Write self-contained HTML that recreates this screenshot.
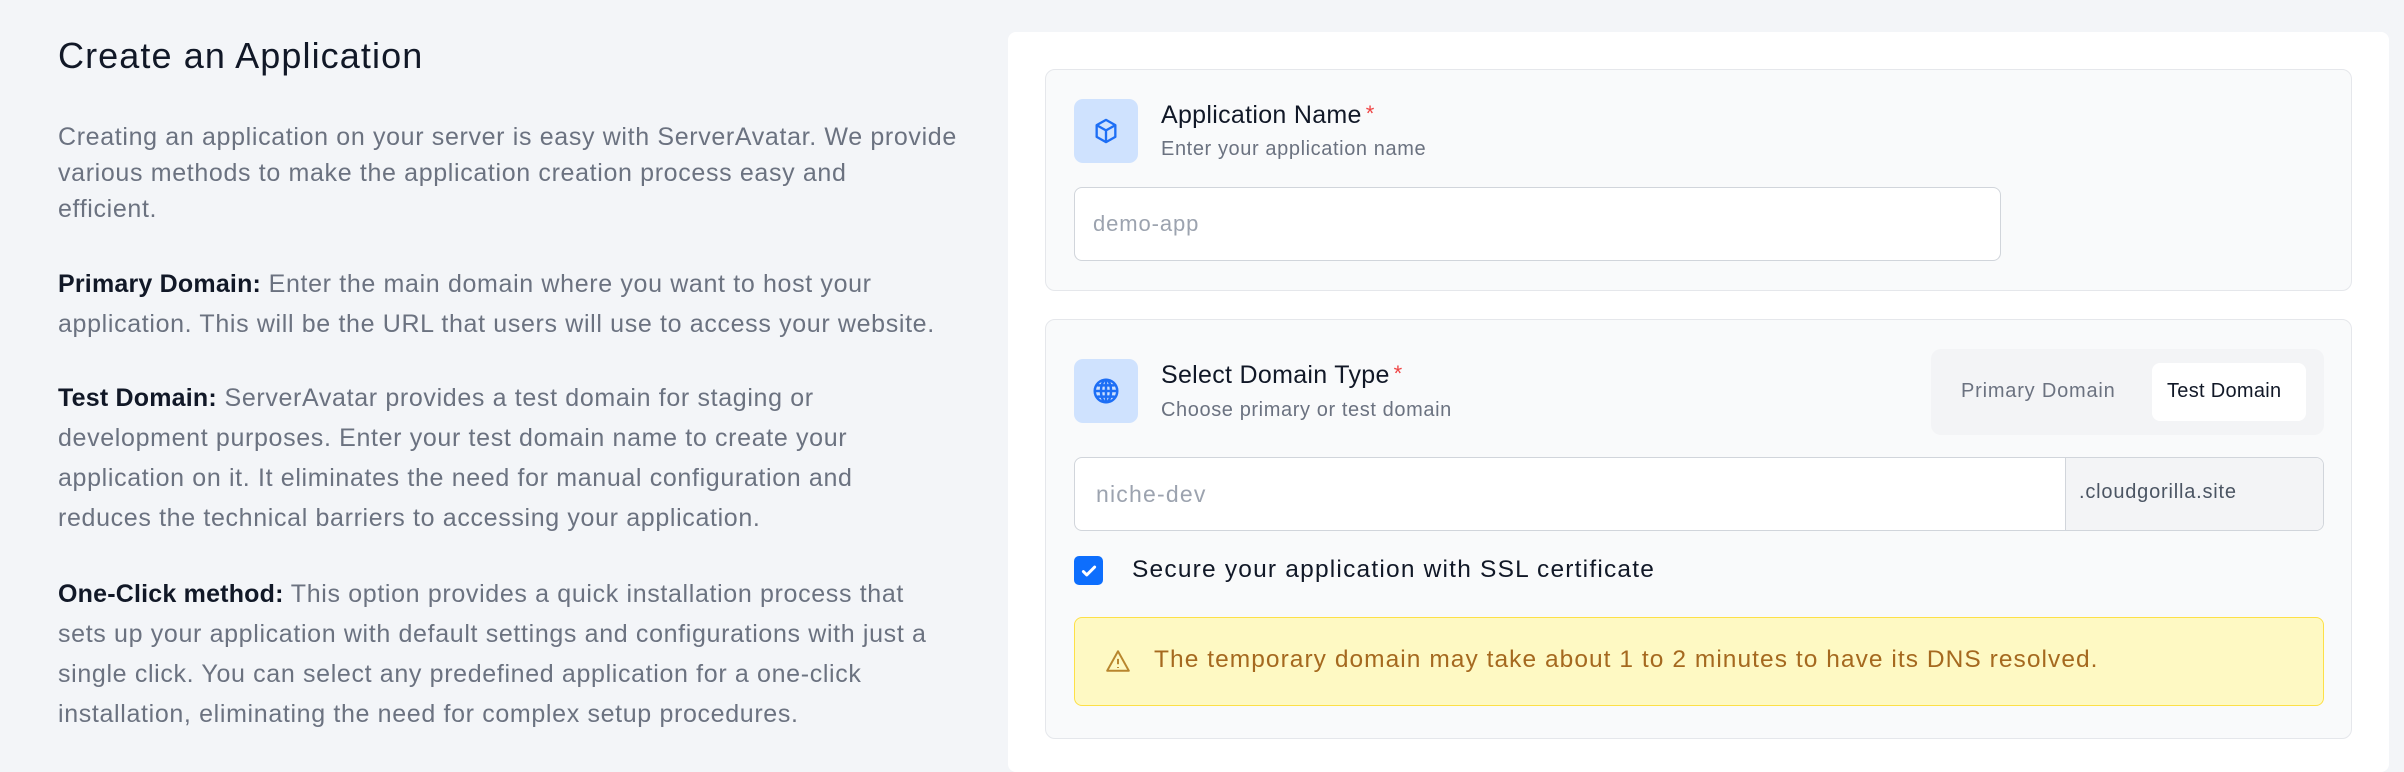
<!DOCTYPE html>
<html><head><meta charset="utf-8"><style>
*{margin:0;padding:0;box-sizing:border-box}
body{width:2404px;height:748px;overflow:hidden;background:#f3f5f8;font-family:"Liberation Sans",sans-serif;position:relative}
.a{position:absolute;white-space:nowrap}
.l{font-size:25px;letter-spacing:0.65px;color:#6b7280;left:58px;line-height:40px}
.l b{color:#111827;letter-spacing:0.2px}
.card{position:absolute;left:1008px;top:32px;width:1381px;height:740px;background:#fff;border-radius:8px}
.sec{position:absolute;left:1045px;width:1307px;background:#f9fafb;border:1.5px solid #e5e7eb;border-radius:10px}
.ib{position:absolute;left:1074px;width:64px;height:64px;background:#cfe2fe;border-radius:9px;display:flex;align-items:center;justify-content:center}
.t{font-size:25px;letter-spacing:0.3px;color:#111827;left:1161px}
.t i{color:#ef4444;font-style:normal;font-size:22px;vertical-align:top;margin-left:4px}
.s{font-size:20px;letter-spacing:0.6px;color:#6b7280;left:1161px}
.inp{position:absolute;left:1074px;height:74px;background:#fff;border:1.5px solid #d1d5db;border-radius:8px}
</style></head><body>
<div class="a" style="left:58px;top:35px;font-size:36px;letter-spacing:1.1px;color:#111827">Create an Application</div>
<div class="a l" style="top:119px;line-height:36px">Creating an application on your server is easy with ServerAvatar. We provide<br>various methods to make the application creation process easy and<br>efficient.</div>
<div class="a l" style="top:264px"><b>Primary Domain:</b> Enter the main domain where you want to host your<br>application. This will be the URL that users will use to access your website.</div>
<div class="a l" style="top:378px"><b>Test Domain:</b> ServerAvatar provides a test domain for staging or<br>development purposes. Enter your test domain name to create your<br>application on it. It eliminates the need for manual configuration and<br>reduces the technical barriers to accessing your application.</div>
<div class="a l" style="top:574px"><b>One-Click method:</b> This option provides a quick installation process that<br>sets up your application with default settings and configurations with just a<br>single click. You can select any predefined application for a one-click<br>installation, eliminating the need for complex setup procedures.</div>

<div class="card"></div>
<div class="sec" style="top:69px;height:222px"></div>
<div class="ib" style="top:99px"><svg width="28" height="28" viewBox="0 0 24 24" fill="none" stroke="#1d6ef5" stroke-width="2" stroke-linejoin="round"><path d="M12 2.5l8 4.5v10l-8 4.5-8-4.5V7z"/><path d="M4 7l8 4.5L20 7M12 11.5V21.5"/></svg></div>
<div class="a t" style="top:101px">Application Name<i>*</i></div>
<div class="a s" style="top:138px">Enter your application name</div>
<div class="inp" style="top:187px;width:927px"></div>
<div class="a" style="left:1093px;top:211px;font-size:22px;letter-spacing:0.9px;color:#9ca3af">demo-app</div>

<div class="sec" style="top:319px;height:420px"></div>
<div class="ib" style="top:359px"><svg width="30" height="30" viewBox="0 0 24 24" fill="none" stroke="#1d6ef5" stroke-width="2"><circle cx="12" cy="12" r="9"/><path d="M3 12h18M12 3v18M5 7.5h14M5 16.5h14"/><ellipse cx="12" cy="12" rx="4" ry="9"/></svg></div>
<div class="a t" style="top:361px">Select Domain Type<i>*</i></div>
<div class="a s" style="top:399px">Choose primary or test domain</div>
<div style="position:absolute;left:1931px;top:349px;width:393px;height:86px;background:#f3f4f6;border-radius:10px"></div>
<div style="position:absolute;left:2152px;top:363px;width:154px;height:58px;background:#fff;border-radius:8px"></div>
<div class="a" style="left:1961px;top:380px;font-size:20px;letter-spacing:0.8px;color:#6b7280">Primary Domain</div>
<div class="a" style="left:2167px;top:380px;font-size:20px;letter-spacing:0.3px;color:#111827">Test Domain</div>
<div class="inp" style="top:457px;width:1250px;overflow:hidden"><div style="position:absolute;left:990px;top:0;right:0;bottom:0;background:#f3f4f6;border-left:1.5px solid #d1d5db"></div></div>
<div class="a" style="left:1096px;top:481px;font-size:23px;letter-spacing:1.2px;color:#9ca3af">niche-dev</div>
<div class="a" style="left:2079px;top:481px;font-size:20px;letter-spacing:0.8px;color:#4b5563">.cloudgorilla.site</div>
<div style="position:absolute;left:1074px;top:556px;width:29px;height:29px;background:#0d6efd;border-radius:5px;display:flex;align-items:center;justify-content:center"><svg width="18" height="18" viewBox="0 0 16 16" fill="none" stroke="#fff" stroke-width="2.6" stroke-linecap="round" stroke-linejoin="round"><path d="M3 8.5l3 3 7-7"/></svg></div>
<div class="a" style="left:1132px;top:556px;font-size:24.5px;letter-spacing:1.2px;color:#111827">Secure your application with SSL certificate</div>
<div style="position:absolute;left:1074px;top:617px;width:1250px;height:89px;background:#fef9c3;border:1.5px solid #fde047;border-radius:8px"></div>
<svg class="a" style="left:1105px;top:648px" width="26" height="26" viewBox="0 0 24 24" fill="none" stroke="#b8862e" stroke-width="1.8" stroke-linejoin="round"><path d="M12 3L2 21h20z"/><path d="M12 10v5M12 17.5v1"/></svg>
<div class="a" style="left:1154px;top:646px;font-size:24.5px;letter-spacing:1.05px;color:#a5691f">The temporary domain may take about 1 to 2 minutes to have its DNS resolved.</div>
</body></html>
